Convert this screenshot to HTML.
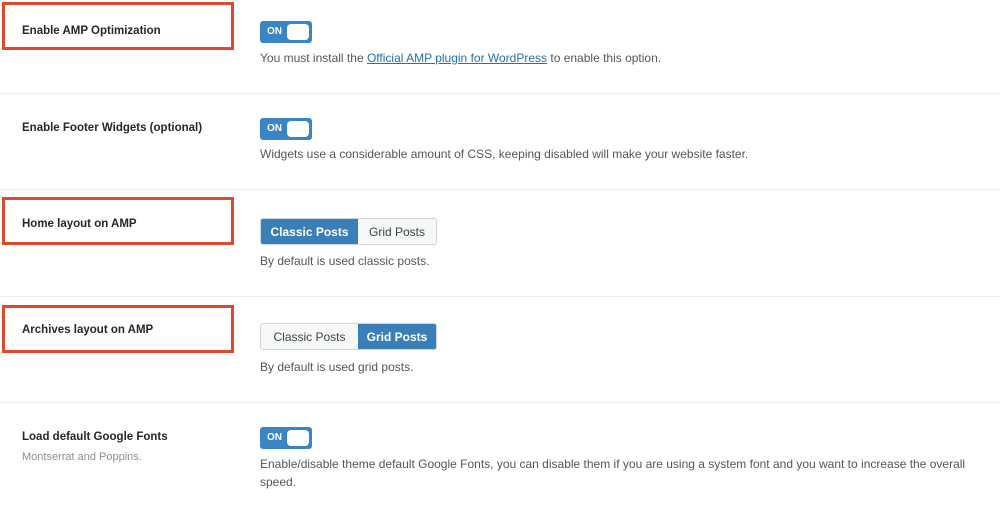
<!DOCTYPE html>
<html><head><style>
body{margin:0;width:1000px;height:512px;background:#fff;font-family:"Liberation Sans",sans-serif;position:relative;overflow:hidden}
.a{position:absolute}
.lbl{font-size:11.5px;font-weight:bold;color:#23282d;left:22px}
.desc{font-size:12px;color:#50575e;left:260px;line-height:18px}
.sep{left:0;width:1000px;height:1px;background:#eceff1}
.red{left:2px;width:226px;height:42px;border:3.5px solid #e04a2c}
.tg{left:260px;width:52px;height:22px;background:#3a86c4;border-radius:3px}
.tg b{position:absolute;left:7px;top:5px;font-size:10px;color:#fff}
.tg i{position:absolute;right:3px;top:3px;width:22px;height:16px;background:#fff;border-radius:4px}
.bg{left:260px;height:27px;width:177px;display:flex;border-radius:3px;overflow:hidden;border:1px solid #cfd4d8;box-sizing:border-box;font-size:12px}
.bg span{display:flex;align-items:center;justify-content:center}
.on{background:#3a7fb8;color:#fff;font-weight:bold}
.off{background:#f6f7f7;color:#3c434a}
</style></head><body>
<div class="a red" style="top:2px"></div>
<div class="a lbl" style="top:25px">Enable AMP Optimization</div>
<div class="a tg" style="top:21px"><b>ON</b><i></i></div>
<div class="a desc" style="top:49px">You must install the <span style="color:#2271b1;text-decoration:underline">Official AMP plugin for WordPress</span> to enable this option.</div>
<div class="a sep" style="top:93px"></div>

<div class="a lbl" style="top:122px">Enable Footer Widgets (optional)</div>
<div class="a tg" style="top:118px"><b>ON</b><i></i></div>
<div class="a desc" style="top:145px">Widgets use a considerable amount of CSS, keeping disabled will make your website faster.</div>
<div class="a sep" style="top:189px"></div>

<div class="a red" style="top:197px"></div>
<div class="a lbl" style="top:218px">Home layout on AMP</div>
<div class="a bg" style="top:218px"><span class="on" style="width:97px">Classic Posts</span><span class="off" style="flex:1">Grid Posts</span></div>
<div class="a desc" style="top:252px">By default is used classic posts.</div>
<div class="a sep" style="top:296px"></div>

<div class="a red" style="top:305px"></div>
<div class="a lbl" style="top:324px">Archives layout on AMP</div>
<div class="a bg" style="top:323px"><span class="off" style="width:97px">Classic Posts</span><span class="on" style="flex:1">Grid Posts</span></div>
<div class="a desc" style="top:358px">By default is used grid posts.</div>
<div class="a sep" style="top:402px"></div>

<div class="a lbl" style="top:431px">Load default Google Fonts</div>
<div class="a" style="top:451px;left:22px;font-size:11px;color:#8c8f94">Montserrat and Poppins.</div>
<div class="a tg" style="top:427px"><b>ON</b><i></i></div>
<div class="a desc" style="top:455px;width:720px">Enable/disable theme default Google Fonts, you can disable them if you are using a system font and you want to increase the overall speed.</div>
</body></html>
